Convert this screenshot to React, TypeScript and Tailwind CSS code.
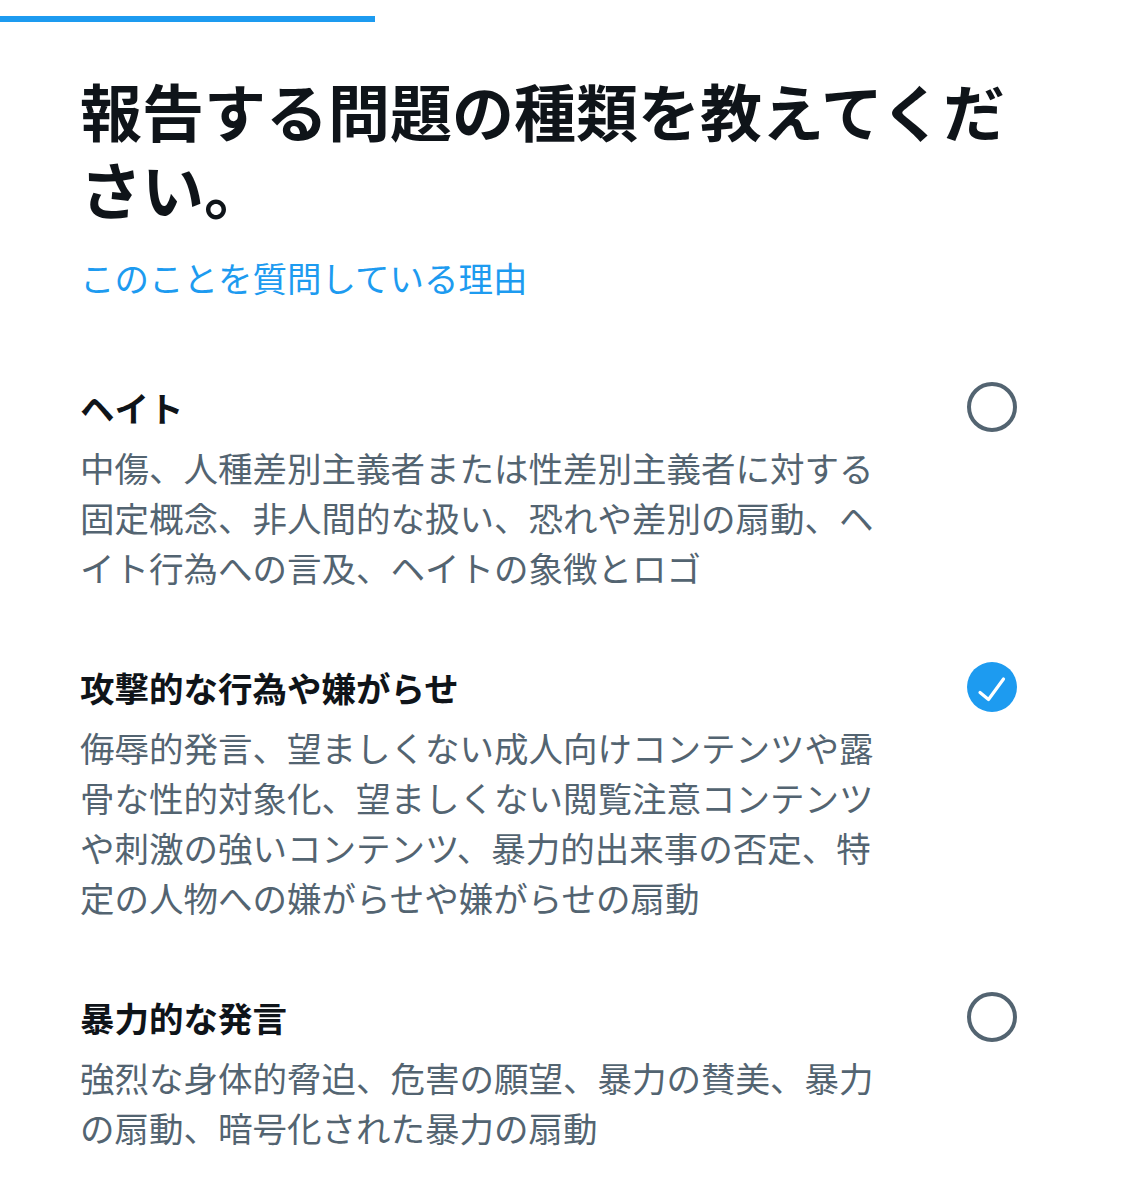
import React from "react";

type Option = {
  id: string;
  title: string;
  description: string;
};

const options: Option[] = [
  {
    id: "hate",
    title: "ヘイト",
    description:
      "中傷、人種差別主義者または性差別主義者に対する固定概念、非人間的な扱い、恐れや差別の扇動、ヘイト行為への言及、ヘイトの象徴とロゴ",
  },
  {
    id: "abuse",
    title: "攻撃的な行為や嫌がらせ",
    description:
      "侮辱的発言、望ましくない成人向けコンテンツや露骨な性的対象化、望ましくない閲覧注意コンテンツや刺激の強いコンテンツ、暴力的出来事の否定、特定の人物への嫌がらせや嫌がらせの扇動",
  },
  {
    id: "violence",
    title: "暴力的な発言",
    description:
      "強烈な身体的脅迫、危害の願望、暴力の賛美、暴力の扇動、暗号化された暴力の扇動",
  },
];

const Radio: React.FC<{ checked: boolean }> = ({ checked }) =>
  checked ? (
    <div className="w-[50px] h-[50px] rounded-full bg-[#1d9bf0] flex items-center justify-center shrink-0">
      <svg width="50" height="50" viewBox="0 0 50 50" fill="none">
        <path
          d="M13 30.5 L21.5 37.5 L36.5 17"
          stroke="white"
          strokeWidth="3.2"
          strokeLinecap="round"
          strokeLinejoin="round"
        />
      </svg>
    </div>
  ) : (
    <div className="w-[50px] h-[50px] rounded-full border-[4px] border-[#536471] shrink-0"></div>
  );

const App: React.FC = () => {
  const selected = "abuse";

  return (
    <div
      className="min-h-[1200px] bg-white text-[#0f1419]"
      style={{ fontFamily: '"Noto Sans CJK JP", "Noto Sans", sans-serif' }}
    >
      <div className="pt-4">
        <div className="h-[6px] w-[375px] bg-[#1d9bf0]"></div>
      </div>

      <div className="pl-[80px] w-[1017px]">
        <h1 className="mt-[49px] w-[960px] text-[62px] leading-[78px] font-bold">
          報告する問題の種類を教えてください。
        </h1>

        <div className="mt-[25px] text-[34.5px] leading-[50px] text-[#1d9bf0]">
          このことを質問している理由
        </div>

        <div className="mt-[80px] flex flex-col gap-[70px]">
          {options.map((opt) => (
            <div key={opt.id} className="flex justify-between items-start">
              <div className="w-[802px]">
                <div className="text-[34.5px] leading-[50px] font-bold">
                  {opt.title}
                </div>
                <p className="mt-[10px] text-[34.5px] leading-[50px] text-[#536471]">
                  {opt.description}
                </p>
              </div>
              <Radio checked={opt.id === selected} />
            </div>
          ))}
        </div>
      </div>
    </div>
  );
};

export default App;
